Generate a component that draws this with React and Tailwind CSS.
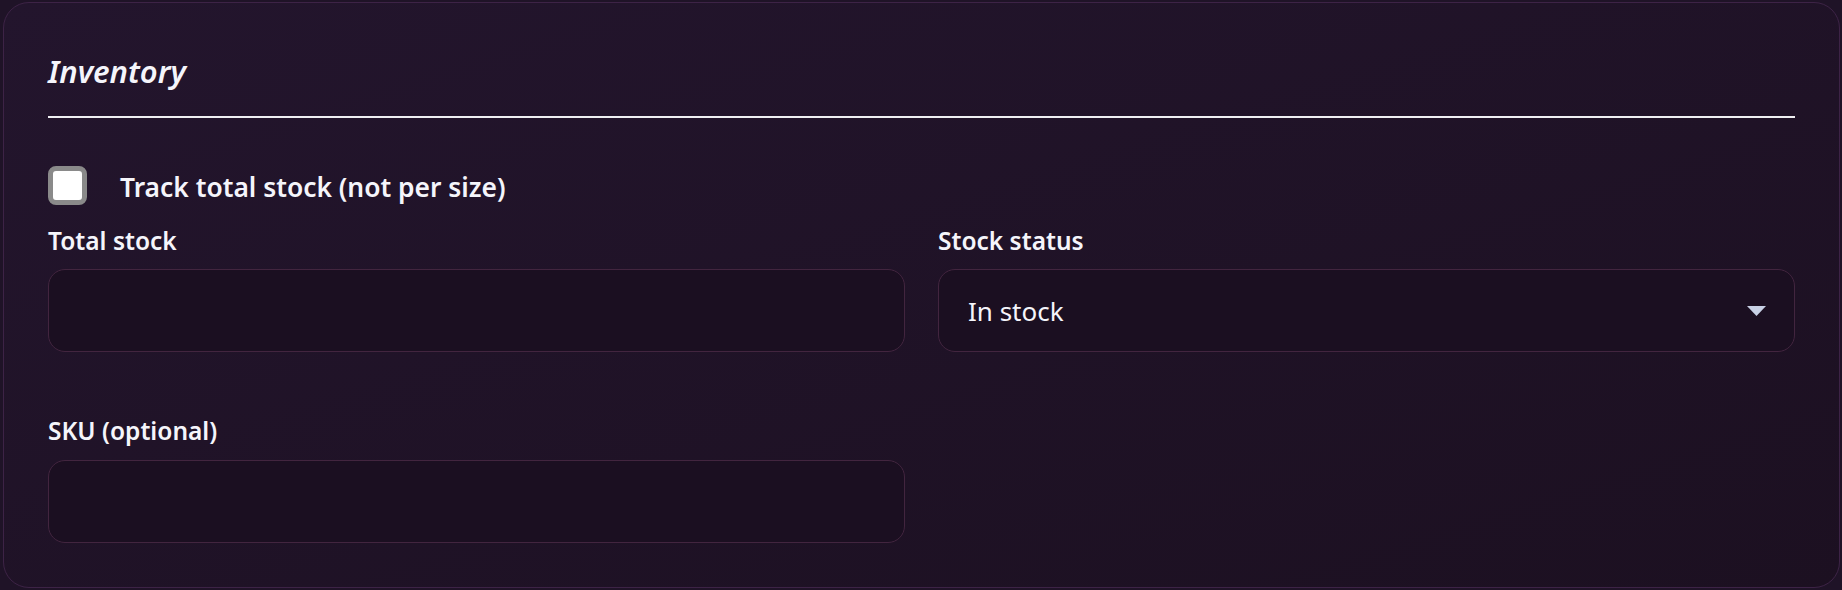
export default function App() {
  return (
    <div
      className="min-h-[590px] w-full bg-[#1f1327] p-[2px] pl-[3px] pr-[2px] text-[#f5f5fb]"
      style={{ fontFamily: '"Noto Sans", "Open Sans", sans-serif' }}
    >
      <div className="h-[586px] rounded-[26px] border border-[#3d2346] bg-gradient-to-br from-[#23152d] to-[#1c1021] px-[44px] pt-[48px]">
        {/* Section header */}
        <div className="border-b-2 border-[#efeff2] pb-[25px]">
          <h2 className="text-[31px] leading-[40px] font-semibold italic">Inventory</h2>
        </div>

        {/* Toggle */}
        <label className="mt-[48px] flex items-center gap-[33px]">
          <span className="h-[39px] w-[39px] shrink-0 rounded-[8px] border-[5px] border-[#8a8a8a] bg-white"></span>
          <span className="pt-[3px] text-[26.4px] leading-[36px] font-semibold">Track total stock (not per size)</span>
        </label>

        <div className="mt-[20px] grid grid-cols-2 gap-x-[33px] gap-y-[63px]">
          <div>
            <div className="text-[24.5px] leading-[32px] font-semibold">Total stock</div>
            <div className="mt-[12px] h-[83px] rounded-[17px] border border-[#42253f] bg-[#1b0f21]"></div>
          </div>

          <div>
            <div className="text-[24.5px] leading-[32px] font-semibold">Stock status</div>
            <div className="mt-[12px] flex h-[83px] items-center justify-between rounded-[17px] border border-[#42253f] bg-[#1b0f21] pl-[29px] pr-[28px]">
              <span className="text-[26px] leading-[36px]">In stock</span>
              <svg width="19" height="10" viewBox="0 0 19 10">
                <path d="M0 0 H19 L9.5 10 Z" fill="#c9d1e6" />
              </svg>
            </div>
          </div>

          <div>
            <div className="text-[24.5px] leading-[32px] font-semibold">SKU (optional)</div>
            <div className="mt-[13px] h-[83px] rounded-[17px] border border-[#42253f] bg-[#1b0f21]"></div>
          </div>
        </div>
      </div>
    </div>
  )
}
